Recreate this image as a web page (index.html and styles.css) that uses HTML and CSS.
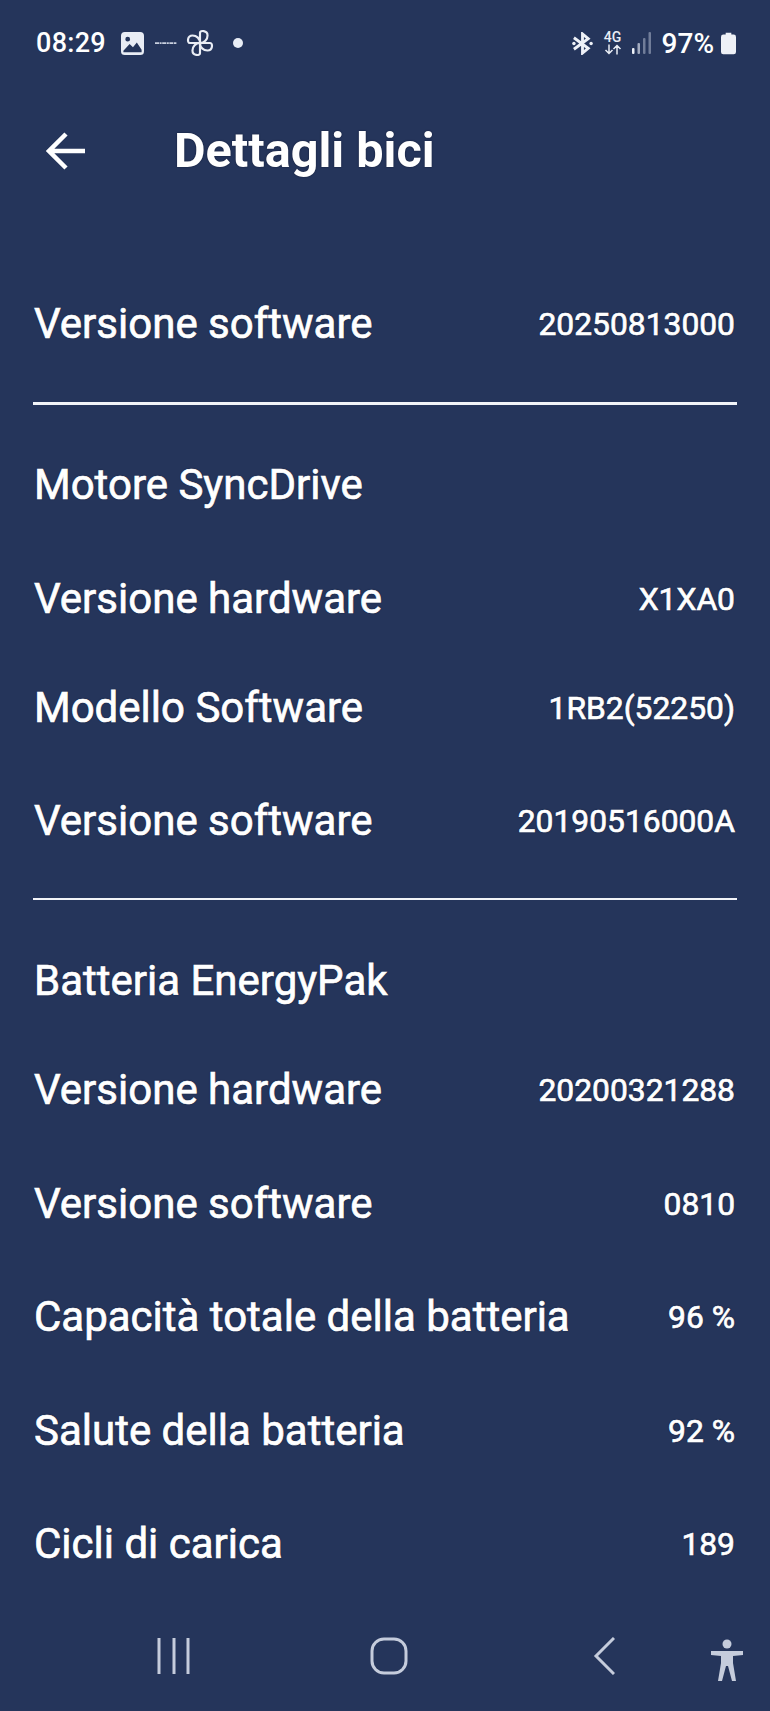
FILE: index.html
```html
<!DOCTYPE html>
<html lang="it">
<head>
<meta charset="utf-8">
<title>Dettagli bici</title>
<link rel="stylesheet" href="styles.css">
</head>
<body>
<div class="screen">
  <header class="status">
    <div class="status-left">
      <span class="time">08:29</span>
      <svg class="ic-gallery" viewBox="0 0 24 24"><path fill="#e9edf5" fill-rule="evenodd" d="M4 0h16a4 4 0 0 1 4 4v16a4 4 0 0 1-4 4H4a4 4 0 0 1-4-4V4a4 4 0 0 1 4-4zM2.500 19.500 9 12.500l3.500 3.500 4-5 5 7.500v2.500H2.500zM7 5a2.500 2.500 0 1 0 0 5 2.500 2.500 0 0 0 0-5z"/></svg>
      <svg class="ic-dash" viewBox="0 0 22 4"><path stroke="#c9d0df" stroke-width="1.800" stroke-dasharray="4 .6 2 .6" d="M0 2.200h22"/></svg>
      <svg class="ic-pin" viewBox="0 0 26 26"><path fill="none" stroke="#e9edf5" stroke-width="2" stroke-linejoin="round" d="M13 13H3.500C1 13 1 6 6 6c4 0 7 3 7 7zM13 13V3.500C13 1 20 1 20 6c0 4-3 7-7 7zM13 13h9.500c2.500 0 2.500 7-2.500 7-4 0-7-3-7-7zM13 13v9.500c0 2.500-7 2.500-7-2.500 0-4 3-7 7-7z"/></svg>
      <span class="dot"></span>
    </div>
    <div class="status-right">
      <svg class="ic-bt" viewBox="0 0 22 24"><path fill="none" stroke="#eef1f7" stroke-width="3" d="M2 6l15 11-6 5V2l6 5L2 18"/><circle cx="2" cy="12" r="1.800" fill="#eef1f7"/><circle cx="20" cy="12" r="1.800" fill="#eef1f7"/></svg>
      <div class="net">
        <span class="net-label">4G</span>
        <svg class="ic-arrows" viewBox="0 0 18 10"><path fill="none" stroke="#e9edf5" stroke-width="1.500" d="M5 0v9M1.500 5.500 5 9l3.500-3.500M13 10V1M9.500 4.500 13 1l3.500 3.500"/></svg>
      </div>
      <svg class="ic-signal" viewBox="0 0 20 22"><rect x="0" y="16" width="2.500" height="6" rx="1" fill="#eef1f7"/><rect x="5.500" y="11" width="2.500" height="11" rx="1" fill="#a3abbf"/><rect x="11" y="6" width="2.500" height="16" rx="1" fill="#717d99"/><rect x="16.500" y="0" width="2.500" height="22" rx="1" fill="#717d99"/></svg>
      <span class="pct">97%</span>
      <svg class="ic-batt" viewBox="0 0 16 23"><path fill="#eef1f7" d="M5 0h6v2h2.500A2.500 2.500 0 0 1 16 4.500V20.500a2.500 2.500 0 0 1-2.500 2.500h-11A2.500 2.500 0 0 1 0 20.500V4.500A2.500 2.500 0 0 1 2.500 2H5z"/></svg>
    </div>
  </header>

  <div class="appbar">
    <svg class="ic-back" viewBox="0 0 40 38"><path fill="none" stroke="#fff" stroke-width="4.500" d="M39 19H4M20 2 3 19l17 17"/></svg>
    <h1 class="title">Dettagli bici</h1>
  </div>

  <main class="content">
    <section class="group group-first">
      <div class="row"><span class="label">Versione software</span><span class="value">20250813000</span></div>
    </section>
    <section class="group group-motor">
      <div class="row"><span class="label">Motore SyncDrive</span></div>
      <div class="row row-next"><span class="label">Versione hardware</span><span class="value">X1XA0</span></div>
      <div class="row row-close"><span class="label">Modello Software</span><span class="value">1RB2(52250)</span></div>
      <div class="row row-next"><span class="label">Versione software</span><span class="value">20190516000A</span></div>
    </section>
    <section class="group group-battery">
      <div class="row"><span class="label">Batteria EnergyPak</span></div>
      <div class="row row-close"><span class="label">Versione hardware</span><span class="value">20200321288</span></div>
      <div class="row row-next"><span class="label">Versione software</span><span class="value">0810</span></div>
      <div class="row row-next"><span class="label">Capacità totale della batteria</span><span class="value">96 %</span></div>
      <div class="row row-next"><span class="label">Salute della batteria</span><span class="value">92 %</span></div>
      <div class="row row-next"><span class="label">Cicli di carica</span><span class="value">189</span></div>
    </section>
  </main>

  <nav class="navbar">
    <svg class="nav-recent" viewBox="0 0 36 36"><path fill="none" stroke="#c5ccdc" stroke-width="3" d="M3 0v36M18 0v36M32 0v36"/></svg>
    <svg class="nav-home" viewBox="0 0 38 38"><rect x="2" y="2" width="34" height="34" rx="12" fill="none" stroke="#c5ccdc" stroke-width="3"/></svg>
    <svg class="nav-back" viewBox="0 0 22 38"><path fill="none" stroke="#c5ccdc" stroke-width="3" d="M21 1 3 19l18 18"/></svg>
    <svg class="nav-a11y" viewBox="0 0 34 42"><circle cx="17" cy="5" r="4.500" fill="#c5ccdc"/><path fill="#c5ccdc" d="M1 12h32v4l-10 1v7l3 18h-4l-4-15h-2l-4 15H8l3-18v-7L1 16z"/></svg>
  </nav>
</div>
</body>
</html>
```

FILE: styles.css
```css
* { box-sizing: border-box; }
html, body { margin: 0; padding: 0; }
body { background: #25355b; }
.screen {
  width: 770px;
  height: 1711px;
  background: #25355b;
  color: #fff;
  font-family: Roboto, "Liberation Sans", sans-serif;
  display: flex;
  flex-direction: column;
  overflow: hidden;
}
.status {
  flex: none;
  height: 88px;
  padding: 26px 34px 0 36px;
  display: flex;
  justify-content: space-between;
  align-items: flex-start;
}
.status-left, .status-right { display: flex; align-items: center; height: 34px; }
.time { font-size: 27px; font-weight: 500; letter-spacing: .3px; }
.ic-gallery { width: 23px; height: 23px; margin-left: 15px; }
.ic-dash { width: 22px; height: 4px; margin-left: 11px; }
.ic-pin { width: 28px; height: 28px; margin-left: 9px; }
.dot { width: 10px; height: 10px; border-radius: 50%; background: #e9edf5; margin-left: 19px; }
.ic-bt { width: 21px; height: 23px; }
.net { display: flex; flex-direction: column; align-items: center; margin-left: 11px; width: 18px; }
.net-label { font-size: 14px; font-weight: 500; line-height: 12px; color: #e9edf5; }
.ic-arrows { width: 18px; height: 11px; margin-top: 1px; }
.ic-signal { width: 20px; height: 22px; margin-left: 10px; }
.pct { font-size: 28px; font-weight: 500; margin-left: 10px; }
.ic-batt { width: 15px; height: 23px; margin-left: 7px; }

.appbar { flex: none; height: 126px; padding-left: 46px; display: flex; align-items: center; }
.ic-back { width: 40px; height: 38px; }
.title { margin: 0 0 0 88px; font-size: 48.600px; font-weight: 700; line-height: 56px; text-shadow: 0 0 1.500px #0a1028; }

.content { flex: 1; min-height: 0; padding: 85px 33px 0; display: flex; flex-direction: column; }
.group { display: flex; flex-direction: column; flex: none; }
.group-first { height: 106px; border-bottom: 3px solid #f2f4f8; }
.group-motor { height: 495px; padding-top: 55px; border-bottom: 2px solid #f2f4f8; }
.group-battery { padding-top: 56px; }
.row { height: 50px; display: flex; justify-content: space-between; align-items: center; padding: 0 2px 0 1px; flex: none; }
.row-next { margin-top: 63.500px; }
.row-close { margin-top: 59px; }
.label, .value { font-weight: 400; -webkit-text-stroke: .7px #fff; text-shadow: 0 0 1.500px #0a1028; }
.label { font-size: 42px; line-height: 50px; }
.value { font-size: 31.800px; line-height: 40px; }

.navbar { flex: none; height: 110px; padding: 37px 0 0 155px; display: flex; align-items: flex-start; }
.nav-recent { width: 38px; height: 36px; flex: none; }
.nav-home { width: 38px; height: 38px; margin-left: 177px; flex: none; margin-top: -1px; }
.nav-back { width: 22px; height: 38px; margin-left: 185px; flex: none; margin-top: -1px; }
.nav-a11y { width: 34px; height: 42px; margin-left: 95px; flex: none; margin-top: 1px; }
```
